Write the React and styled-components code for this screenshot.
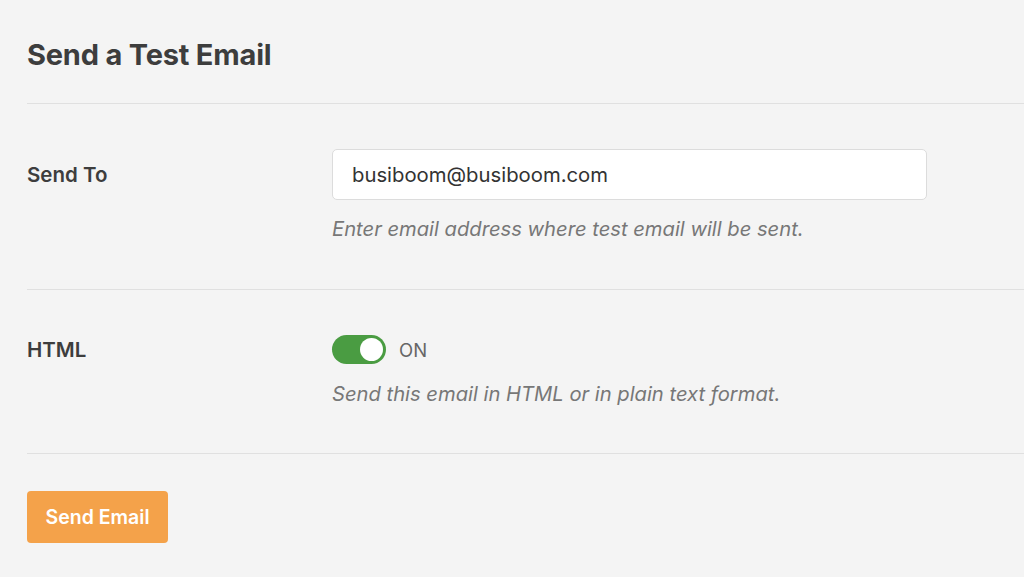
import React from 'react';
import styled, { createGlobalStyle } from 'styled-components';

const GlobalStyle = createGlobalStyle`
  html, body {
    margin: 0;
    padding: 0;
    background: #f4f4f4;
    font-family: Inter, "Noto Sans", Arial, sans-serif;
    overflow: hidden;
  }
`;

export default function App() {
    const [email, setEmail] = React.useState('busiboom@busiboom.com');
    const [html, setHtml] = React.useState(true);

    return (
        <>
            <GlobalStyle />
            <Page>
                <Header>
                    <Title>Send a Test Email</Title>
                </Header>
                <Row height={186}>
                    <Label line={51}>Send To</Label>
                    <Field>
                        <Input value={email} onChange={e => setEmail(e.target.value)} />
                        <Help>Enter email address where test email will be sent.</Help>
                    </Field>
                </Row>
                <Row height={164}>
                    <Label line={29}>HTML</Label>
                    <Field>
                        <ToggleLine>
                            <Toggle on={html} onClick={() => setHtml(!html)}>
                                <Knob />
                            </Toggle>
                            <ToggleText>{html ? 'ON' : 'OFF'}</ToggleText>
                        </ToggleLine>
                        <Help>Send this email in HTML or in plain text format.</Help>
                    </Field>
                </Row>
                <Footer>
                    <Button>Send Email</Button>
                </Footer>
            </Page>
        </>
    );
}

const Page = styled.div`
    padding-left: 27px;
    min-height: 577px;
    box-sizing: border-box;
`;

const Header = styled.div`
    height: 103px;
    display: flex;
    align-items: center;
    border-bottom: 1px solid #e0e0e0;
`;

const Title = styled.h1`
    margin: 0;
    margin-top: 6px;
    font-size: 29px;
    font-weight: 700;
    color: #3d3d3d;
    letter-spacing: -0.2px;
`;

const Row = styled.div`
    display: grid;
    grid-template-columns: 305px 595px;
    align-items: start;
    padding-top: 45px;
    height: ${p => p.height}px;
    box-sizing: border-box;
    border-bottom: 1px solid #e0e0e0;
`;

const Label = styled.div`
    font-size: 20.5px;
    font-weight: 600;
    color: #3d3d3d;
    line-height: ${p => p.line}px;
    height: ${p => p.line}px;
`;

const Field = styled.div`
    display: flex;
    flex-direction: column;
`;

const Input = styled.input`
    height: 51px;
    box-sizing: border-box;
    border: 1px solid #dcdcdc;
    border-radius: 5px;
    background: #fff;
    padding: 0 19px;
    font-family: inherit;
    font-size: 20.3px;
    color: #333;
    outline: none;
`;

const Help = styled.div`
    margin-top: 16px;
    font-size: 20.2px;
    font-style: italic;
    color: #777;
`;

const ToggleLine = styled.div`
    display: flex;
    align-items: center;
    gap: 13px;
    height: 29px;
    & + ${Help} { margin-top: 17px; }
`;

const Toggle = styled.div`
    width: 54px;
    height: 29px;
    border-radius: 15px;
    background: ${p => (p.on ? '#4a9c42' : '#ccc')};
    display: flex;
    align-items: center;
    padding: 0 3px;
    box-sizing: border-box;
    justify-content: ${p => (p.on ? 'flex-end' : 'flex-start')};
    cursor: pointer;
`;

const Knob = styled.div`
    width: 23px;
    height: 23px;
    border-radius: 50%;
    background: #fff;
`;

const ToggleText = styled.span`
    font-size: 18.5px;
    color: #666;
`;

const Footer = styled.div`
    padding-top: 37px;
`;

const Button = styled.button`
    width: 141px;
    height: 52px;
    border: none;
    border-radius: 4px;
    background: #f4a24a;
    color: #fff;
    font-family: inherit;
    font-size: 19.5px;
    font-weight: 600;
    cursor: pointer;
`;
